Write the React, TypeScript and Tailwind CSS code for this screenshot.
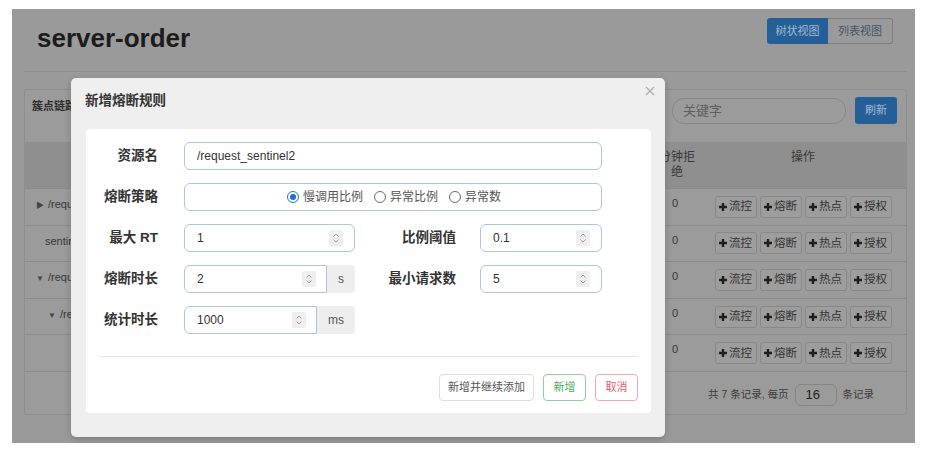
import React from "react";

const Spin = () => (
  <span className="flex h-[16px] w-[14px] items-center justify-center rounded-[2px] bg-[#efefef]">
    <svg width="8" height="12" viewBox="0 0 8 12" fill="none" stroke="#a0a0a0" strokeWidth="1">
      <path d="M1.5 4.5 L4 2 L6.5 4.5" />
      <path d="M1.5 7.5 L4 10 L6.5 7.5" />
    </svg>
  </span>
);

const Radio = ({ checked, label }: { checked?: boolean; label: string }) => (
  <span className="flex items-center gap-[4px]">
    {checked ? (
      <span className="flex h-[12px] w-[12px] items-center justify-center rounded-full border-[1.5px] border-[#1a6fe0]">
        <span className="h-[6px] w-[6px] rounded-full bg-[#1a6fe0]" />
      </span>
    ) : (
      <span className="h-[12px] w-[12px] rounded-full border-[1.5px] border-[#6a6a6a]" />
    )}
    <span className="text-[12px] leading-[16px] text-[#555]">{label}</span>
  </span>
);

const Plus = () => (
  <svg width="8" height="8" viewBox="0 0 8 8" stroke="#1e1e1e" strokeWidth="2.4">
    <path d="M4 0 V8 M0 4 H8" />
  </svg>
);

const ActBtn = ({ t }: { t: string }) => (
  <span className="flex h-[22px] w-[42px] items-center justify-center gap-[2px] rounded-[3px] border border-[#888] bg-[#9d9d9d] text-[11.5px] text-[#333]">
    <Plus />
    {t}
  </span>
);

const rows = [
  { tri: "▶", name: "/request_sentinel", pl: "pl-[11px]" },
  { tri: "", name: "sentinel_default_context", pl: "pl-[20px]" },
  { tri: "▼", name: "/request_sentinel2", pl: "pl-[11px]" },
  { tri: "▼", name: "/request_sentinel2", pl: "pl-[23px]" },
  { tri: "", name: "/request_sentinel2", pl: "pl-[47px]" },
];

const Label = ({ children, w }: { children: React.ReactNode; w: string }) => (
  <div className={`${w} shrink-0 text-right text-[13.5px] font-bold leading-[18px] text-[#333]`}>{children}</div>
);

export default function App() {
  return (
    <div className="h-[464px] w-[937px] bg-white pl-[12px] pt-[9px] font-['Liberation_Sans','Noto_Sans_CJK_SC',sans-serif]">
      <div className="relative h-[434px] w-[903px] overflow-hidden bg-[#9a9a9a] pl-[12px] pr-[8px]">
        {/* header */}
        <div className="flex h-[63px] items-start justify-between border-b border-[#8d8d8d]">
          <div className="pl-[13px] pt-[12px] text-[26px] font-bold leading-[34px] text-[#1c1c1c]">server-order</div>
          <div className="mr-[14px] mt-[9px] flex h-[26px] text-[11px]">
            <span className="flex w-[61px] items-center justify-center rounded-l-[3px] bg-[#245f97] text-[#a3b9cf]">树状视图</span>
            <span className="flex w-[65px] items-center justify-center rounded-r-[3px] border border-l-0 border-[#7e7e7e] text-[#3f5670]">列表视图</span>
          </div>
        </div>

        {/* panel */}
        <div className="mt-[17px] h-[326px] w-[883px] rounded-[3px] border border-[#8e8e8e] bg-[#9b9b9b]">
          <div className="flex h-[52px] items-start justify-between">
            <div className="w-[47px] overflow-hidden whitespace-nowrap pl-[7px] pt-[9px] text-[11px] font-bold leading-[14px] text-[#2e2e2e]">簇点链路</div>
            <div className="flex items-start gap-[9px] pr-[9px]">
              <div className="mt-[8px] flex h-[26px] w-[174px] items-center rounded-[12px] border border-[#878787] pl-[10px] text-[13px] text-[#5e5e5e]">关键字</div>
              <div className="mt-[7px] flex h-[27px] w-[42px] items-center justify-center rounded-[3px] bg-[#245f97] text-[11px] text-[#a3b9cf]">刷新</div>
            </div>
          </div>
          {/* table header */}
          <div className="flex h-[46px] bg-[#8f8f8f] text-[12px] leading-[15px] text-[#383838]">
            <div className="flex-1 pt-[8px] text-center">资源名</div>
            <div className="w-[46px] px-[5px] pt-[8px] text-center">分钟拒绝</div>
            <div className="w-[206px] pt-[8px] text-center">操作</div>
          </div>
          {rows.map((r, i) => (
            <div key={i} className="flex h-[36.6px] border-t border-[#8b8b8b] text-[11px] text-[#363636]">
              <div className="flex-1">
                <div className={`w-[47px] overflow-hidden whitespace-nowrap ${r.pl} pt-[8px] leading-[15px]`}>
                  {r.tri && <span className="mr-[4px] text-[8px] text-[#444]">{r.tri}</span>}
                  {r.name}
                </div>
              </div>
              <div className="w-[46px] pr-[4px] pt-[7px] text-center leading-[15px]">0</div>
              <div className="flex w-[206px] items-center justify-center gap-[3px]">
                <ActBtn t="流控" />
                <ActBtn t="熔断" />
                <ActBtn t="热点" />
                <ActBtn t="授权" />
              </div>
            </div>
          ))}
          <div className="flex items-center justify-end border-t border-[#8b8b8b] pr-[32px] pt-[12px] text-[10.5px] text-[#3a3a3a]">
            <span>共 7 条记录, 每页</span>
            <span className="ml-[6px] flex h-[22px] w-[42px] items-center rounded-[6px] border border-[#868686] pl-[10px] text-[13px] text-[#222]">16</span>
            <span className="ml-[6px]">条记录</span>
          </div>
        </div>

        {/* modal */}
        <div className="absolute left-[59px] top-[69px] h-[359px] w-[594px] rounded-[5px] bg-[#efefef] shadow-[0_2px_6px_rgba(0,0,0,0.2)]">
          <div className="pl-[14px] pt-[14px] text-[13.5px] font-bold leading-[18px] text-[#333]">新增熔断规则</div>
          <svg className="absolute right-[10px] top-[8px]" width="10" height="10" viewBox="0 0 10 10" stroke="#b0b0b0" strokeWidth="1.4">
            <path d="M1 1 L9 9 M9 1 L1 9" />
          </svg>
          <div className="mx-[15px] mt-[19px] h-[284px] w-[565px] rounded-[4px] bg-white px-[13px] pt-[13px]">
            {/* row 1 */}
            <div className="flex h-[28px] items-center">
              <Label w="w-[59px]">资源名</Label>
              <div className="ml-[26px] flex h-[28px] w-[418px] items-center rounded-[6px] border border-[#a9c6e4] pl-[12px] text-[12px] text-[#333]">/request_sentinel2</div>
            </div>
            {/* row 2 */}
            <div className="mt-[13px] flex h-[28px] items-center">
              <Label w="w-[59px]">熔断策略</Label>
              <div className="ml-[26px] flex h-[28px] w-[418px] items-center justify-center gap-[11px] rounded-[6px] border border-[#a9c6e4] pl-[2px]">
                <Radio checked label="慢调用比例" />
                <Radio label="异常比例" />
                <Radio label="异常数" />
              </div>
            </div>
            {/* row 3 */}
            <div className="mt-[13px] flex h-[28px] items-center">
              <Label w="w-[59px]">最大 RT</Label>
              <div className="ml-[26px] flex h-[28px] w-[171px] items-center justify-between rounded-[6px] border border-[#a9c6e4] pl-[12px] pr-[11px] text-[12px] text-[#333]">
                <span>1</span>
                <Spin />
              </div>
              <Label w="w-[101px]">比例阈值</Label>
              <div className="ml-[24px] flex h-[28px] w-[122px] items-center justify-between rounded-[6px] border border-[#a9c6e4] pl-[12px] pr-[11px] text-[12px] text-[#333]">
                <span>0.1</span>
                <Spin />
              </div>
            </div>
            {/* row 4 */}
            <div className="mt-[13px] flex h-[28px] items-center">
              <Label w="w-[59px]">熔断时长</Label>
              <div className="ml-[26px] flex h-[28px] w-[171px]">
                <div className="flex flex-1 items-center justify-between rounded-l-[6px] border border-[#a9c6e4] pl-[12px] pr-[10px] text-[12px] text-[#333]">
                  <span>2</span>
                  <Spin />
                </div>
                <div className="flex items-center rounded-r-[4px] bg-[#eeeeee] px-[11px] text-[12px] text-[#555]">s</div>
              </div>
              <Label w="w-[101px]">最小请求数</Label>
              <div className="ml-[24px] flex h-[28px] w-[122px] items-center justify-between rounded-[6px] border border-[#a9c6e4] pl-[12px] pr-[11px] text-[12px] text-[#333]">
                <span>5</span>
                <Spin />
              </div>
            </div>
            {/* row 5 */}
            <div className="mt-[13px] flex h-[28px] items-center">
              <Label w="w-[59px]">统计时长</Label>
              <div className="ml-[26px] flex h-[28px] w-[171px]">
                <div className="flex flex-1 items-center justify-between rounded-l-[6px] border border-[#a9c6e4] pl-[12px] pr-[10px] text-[12px] text-[#333]">
                  <span>1000</span>
                  <Spin />
                </div>
                <div className="flex items-center rounded-r-[4px] bg-[#eeeeee] px-[11px] text-[12px] text-[#555]">ms</div>
              </div>
            </div>
            {/* divider */}
            <div className="mt-[22px] border-t border-[#e6e6e6]" />
            {/* buttons */}
            <div className="mt-[17px] flex justify-end gap-[9px]">
              <span className="flex h-[27px] w-[95px] items-center justify-center rounded-[4px] border border-[#dedede] text-[11px] text-[#555]">新增并继续添加</span>
              <span className="flex h-[27px] w-[43px] items-center justify-center rounded-[4px] border border-[#8fcf9c] text-[11px] text-[#4cae5c]">新增</span>
              <span className="flex h-[27px] w-[43px] items-center justify-center rounded-[4px] border border-[#f2a7b2] text-[11px] text-[#e35b6c]">取消</span>
            </div>
          </div>
        </div>
      </div>
    </div>
  );
}
